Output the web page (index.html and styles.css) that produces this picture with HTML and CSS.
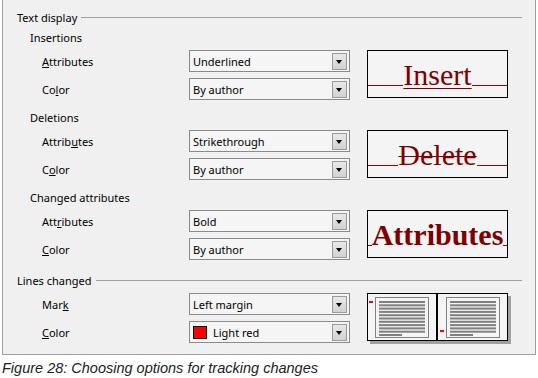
FILE: index.html
```html
<!DOCTYPE html>
<html lang="en-US">
<head>
  <meta charset="UTF-8">
  <title>Track changes options</title>
  <link rel="stylesheet" href="styles.css">
</head>
<body>

  <div class="dialog">
    <div class="section-title"><span>Text display</span></div>

    <div class="group group-first">
      <div class="group-title">Insertions</div>
      <div class="group-body">
        <div class="fields">
          <div class="field">
            <span class="field-label"><u>A</u>ttributes</span>
            <div class="select"><span class="select-text">Underlined</span><span class="arrow"></span></div>
          </div>
          <div class="field">
            <span class="field-label">Co<u>l</u>or</span>
            <div class="select"><span class="select-text">By author</span><span class="arrow"></span></div>
          </div>
        </div>
        <div class="preview preview-insert"><span>Insert</span></div>
      </div>
    </div>

    <div class="group">
      <div class="group-title">Deletions</div>
      <div class="group-body">
        <div class="fields">
          <div class="field">
            <span class="field-label">Attrib<u>u</u>tes</span>
            <div class="select"><span class="select-text">Strikethrough</span><span class="arrow"></span></div>
          </div>
          <div class="field">
            <span class="field-label">C<u>o</u>lor</span>
            <div class="select"><span class="select-text">By author</span><span class="arrow"></span></div>
          </div>
        </div>
        <div class="preview preview-delete"><span>Delete</span></div>
      </div>
    </div>

    <div class="group">
      <div class="group-title">Changed attributes</div>
      <div class="group-body">
        <div class="fields">
          <div class="field">
            <span class="field-label">Att<u>r</u>ibutes</span>
            <div class="select"><span class="select-text">Bold</span><span class="arrow"></span></div>
          </div>
          <div class="field">
            <span class="field-label"><u>C</u>olor</span>
            <div class="select"><span class="select-text">By author</span><span class="arrow"></span></div>
          </div>
        </div>
        <div class="preview preview-attr"><span>Attributes</span></div>
      </div>
    </div>

    <div class="section-title section-lines"><span>Lines changed</span></div>

    <div class="group-body group-lines">
      <div class="fields">
        <div class="field">
          <span class="field-label">Mar<u>k</u></span>
          <div class="select"><span class="select-text">Left margin</span><span class="arrow"></span></div>
        </div>
        <div class="field">
          <span class="field-label"><u>C</u>olor</span>
          <div class="select"><span class="swatch"></span><span class="select-text">Light red</span><span class="arrow"></span></div>
        </div>
      </div>
      <div class="preview preview-lines">
        <svg width="139" height="46" viewBox="0 0 139 46">
          <rect x="1" y="7" width="4" height="2" fill="#ff0000"/>
          <rect x="7.5" y="3.5" width="53" height="40" fill="none" stroke="#808080"/>
          <g fill="#808080">
            <rect x="11" y="7" width="46" height="2"/>
            <rect x="11" y="10.3" width="46" height="2"/>
            <rect x="11" y="13.6" width="46" height="2"/>
            <rect x="11" y="16.9" width="46" height="2"/>
            <rect x="11" y="20.2" width="46" height="2"/>
            <rect x="11" y="23.5" width="46" height="2"/>
            <rect x="11" y="26.8" width="46" height="2"/>
            <rect x="11" y="30.1" width="46" height="2"/>
            <rect x="11" y="33.4" width="46" height="2"/>
            <rect x="11" y="36.7" width="46" height="2"/>
            <rect x="11" y="40" width="23" height="2"/>
          </g>
          <rect x="68" y="0" width="2" height="46" fill="#000"/>
          <rect x="72" y="36" width="4" height="2" fill="#ff0000"/>
          <rect x="78.5" y="3.5" width="53" height="40" fill="none" stroke="#808080"/>
          <g fill="#808080">
            <rect x="82" y="7" width="46" height="2"/>
            <rect x="82" y="10.3" width="46" height="2"/>
            <rect x="82" y="13.6" width="46" height="2"/>
            <rect x="82" y="16.9" width="46" height="2"/>
            <rect x="82" y="20.2" width="46" height="2"/>
            <rect x="82" y="23.5" width="46" height="2"/>
            <rect x="82" y="26.8" width="46" height="2"/>
            <rect x="82" y="30.1" width="46" height="2"/>
            <rect x="82" y="33.4" width="46" height="2"/>
            <rect x="82" y="36.7" width="46" height="2"/>
            <rect x="82" y="40" width="23" height="2"/>
          </g>
        </svg>
      </div>
    </div>
  </div>

  <p class="caption">Figure 28: Choosing options for tracking changes</p>

</body>
</html>
```

FILE: styles.css
```css
body {
  margin: 0;
  background: #fff;
  font-family: "Noto Sans", "Open Sans", sans-serif;
  font-size: 11px;
  color: #000;
}
u {
  text-decoration: underline;
  text-underline-offset: 1px;
}
.dialog {
  box-sizing: border-box;
  width: 534px;
  margin-left: 2px;
  padding: 7px 0 11px;
  border: 1px solid #a0a0a0;
  border-top: none;
  background: #f0f0f0;
}
.section-title {
  display: flex;
  align-items: center;
  height: 20px;
  padding-left: 14px;
}
.section-title::after {
  content: "";
  flex: 1;
  height: 1px;
  margin: 0 13px 0 4px;
  background: #a0a0a0;
}
.section-lines {
  margin-top: 10px;
}
.group {
  margin-top: 10px;
}
.group-first {
  margin-top: 3px;
}
.group-title {
  height: 16px;
  line-height: 16px;
  padding-left: 27px;
  margin-bottom: 4px;
}
.group-body {
  display: flex;
  align-items: flex-start;
}
.group-lines {
  margin-top: 3px;
}
.fields {
  display: flex;
  flex-direction: column;
  gap: 6px;
}
.field {
  display: flex;
  align-items: center;
}
.field-label {
  box-sizing: border-box;
  width: 186px;
  padding-left: 39px;
}
.select {
  box-sizing: border-box;
  display: flex;
  align-items: center;
  width: 161px;
  height: 22px;
  padding: 0 2px 0 3px;
  border: 1px solid #8a8a8a;
  background: #f5f5f5;
}
.select-text {
  flex: 1;
}
.swatch {
  box-sizing: border-box;
  width: 14px;
  height: 13px;
  margin-right: 6px;
  border: 1px solid #000;
  background: #ff0000;
}
.arrow {
  box-sizing: border-box;
  position: relative;
  width: 15px;
  height: 17px;
  margin-top: 1px;
  border: 1px solid #9a9a9a;
  background: linear-gradient(#e8e8e8, #d2d2d2);
}
.arrow::after {
  content: "";
  position: absolute;
  top: 6px;
  left: 3px;
  border-left: 3.5px solid transparent;
  border-right: 3.5px solid transparent;
  border-top: 4px solid #000;
}
.preview {
  box-sizing: border-box;
  position: relative;
  width: 141px;
  height: 48px;
  margin-left: 17px;
  border: 1px solid #000;
  background: #f4f4f4;
  text-align: center;
  font-family: "Liberation Serif", serif;
  font-size: 30px;
  line-height: 47px;
  color: #800000;
  white-space: nowrap;
}
.preview::before {
  content: "";
  position: absolute;
  top: 34px;
  left: 0;
  right: 0;
  height: 1px;
  background: #a00000;
}
.preview span {
  position: relative;
  background: #f4f4f4;
}
.preview-insert span {
  text-decoration: underline;
  text-decoration-thickness: 1px;
  text-underline-offset: 3px;
}
.preview-delete span {
  text-decoration: line-through;
  text-decoration-thickness: 1px;
}
.preview-attr span {
  font-weight: bold;
}
.preview-lines {
  line-height: 0;
  box-shadow: 3px 3px 0 #a0a0a0;
}
.preview-lines::before {
  display: none;
}
.caption {
  margin: 4px 0 0 2px;
  font-family: "Liberation Sans", sans-serif;
  font-style: italic;
  font-size: 14.5px;
  line-height: 18px;
  color: #222;
}
```
